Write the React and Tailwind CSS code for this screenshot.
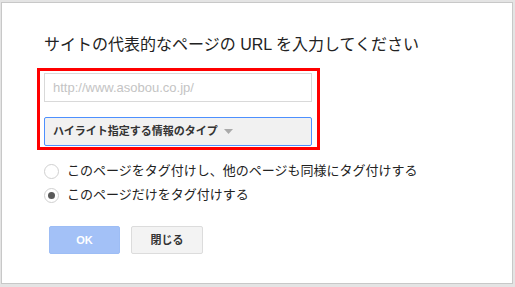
import React from "react";

const font = { fontFamily: '"Liberation Sans", "Noto Sans CJK JP", sans-serif' };

function Radio({ checked, label }) {
  return (
    <div className="flex items-center h-[24px]">
      <span className="w-[15px] h-[15px] rounded-full border border-[#d0d0d0] bg-white flex items-center justify-center shrink-0">
        {checked && <span className="w-[7px] h-[7px] rounded-full bg-[#5a5a5a]" />}
      </span>
      <span className="ml-[8px] text-[13px] text-[#222] leading-[24px]">{label}</span>
    </div>
  );
}

export default function App() {
  return (
    <div className="w-[515px] h-[287px] bg-[#e4e4e4] pt-[2px] pl-[1px] overflow-hidden" style={font}>
      <div className="w-[512px] h-[282px] bg-white border border-[#c8c8c8] flex flex-col pl-[42px] pt-[32px]">
        <div className="text-[16px] leading-[20px] text-[#222]">
          サイトの代表的なページの URL を入力してください
        </div>
        <div className="-ml-[7px] mt-[13px] w-[283px] h-[82px] border-[3px] border-[#ff0000] pl-[4px] pt-[2px] flex flex-col">
          <div className="w-[268px] h-[29px] border border-[#d9d9d9] bg-white flex items-center pl-[8px] text-[13px] text-[#c4c4c4]">
            http://www.asobou.co.jp/
          </div>
          <div className="mt-[15px] w-[268px] h-[29px] border border-[#4d90fe] rounded-[2px] bg-[#f1f1f1] flex items-center pl-[8px] text-[11px] font-bold text-[#333]">
            ハイライト指定する情報のタイプ
            <svg width="9" height="5" viewBox="0 0 9 5" className="ml-[6px]">
              <path d="M0 0 L9 0 L4.5 5 Z" fill="#aaaaaa" />
            </svg>
          </div>
        </div>
        <div className="mt-[9px] flex flex-col">
          <Radio label="このページをタグ付けし、他のページも同様にタグ付けする" />
          <Radio checked label="このページだけをタグ付けする" />
        </div>
        <div className="mt-[19px] ml-[5px] flex gap-[11px]">
          <div className="w-[71px] h-[28px] rounded-[2px] bg-[#a3c1f7] border border-[#9dbdf5] flex items-center justify-center text-[11px] font-bold text-white">
            OK
          </div>
          <div className="w-[72px] h-[28px] rounded-[2px] bg-[#f3f3f3] border border-[#dcdcdc] flex items-center justify-center text-[11px] font-bold text-[#333]">
            閉じる
          </div>
        </div>
      </div>
    </div>
  );
}
